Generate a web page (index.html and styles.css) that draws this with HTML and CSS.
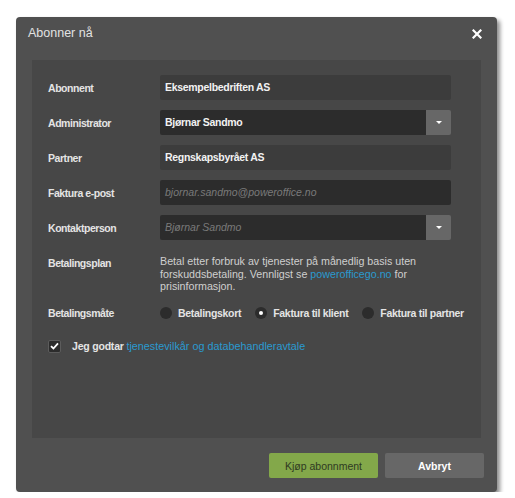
FILE: index.html
```html
<!DOCTYPE html>
<html lang="no">
<head>
    <meta charset="UTF-8">
    <title>Abonner nå</title>
    <link rel="stylesheet" href="styles.css">
</head>
<body>

    <div class="dialog">
        <div class="dialog-header">
            <span class="dialog-title">Abonner nå</span>
            <svg class="close" width="10" height="10" viewBox="0 0 10 10">
                <path d="M1.5 1.5L8.5 8.5M8.5 1.5L1.5 8.5" stroke="#fff" stroke-width="2.2" stroke-linecap="square"/>
            </svg>
        </div>

        <div class="panel">
            <div class="row">
                <div class="label">Abonnent</div>
                <div class="field readonly">Eksempelbedriften AS</div>
            </div>
            <div class="row">
                <div class="label">Administrator</div>
                <div class="select">
                    <div class="field dark">Bjørnar Sandmo</div>
                    <div class="caret"><span></span></div>
                </div>
            </div>
            <div class="row">
                <div class="label">Partner</div>
                <div class="field readonly">Regnskapsbyrået AS</div>
            </div>
            <div class="row">
                <div class="label">Faktura e-post</div>
                <div class="field dark placeholder">bjornar.sandmo@poweroffice.no</div>
            </div>
            <div class="row">
                <div class="label">Kontaktperson</div>
                <div class="select">
                    <div class="field dark placeholder">Bjørnar Sandmo</div>
                    <div class="caret"><span></span></div>
                </div>
            </div>
            <div class="row text-row">
                <div class="label">Betalingsplan</div>
                <p class="plan">Betal etter forbruk av tjenester på månedlig basis uten forskuddsbetaling. Vennligst se <a href="#">powerofficego.no</a> for prisinformasjon.</p>
            </div>
            <div class="row radio-row">
                <div class="label">Betalingsmåte</div>
                <div class="radios">
                    <span class="radio"><i></i>Betalingskort</span>
                    <span class="radio checked"><i></i>Faktura til klient</span>
                    <span class="radio"><i></i>Faktura til partner</span>
                </div>
            </div>
            <div class="terms">
                <span class="checkbox">
                    <svg width="9" height="8" viewBox="0 0 9 8"><path d="M1 4.2L3.4 6.5L8 1.3" fill="none" stroke="#fff" stroke-width="1.8"/></svg>
                </span>
                <span class="terms-text">Jeg godtar <a href="#">tjenestevilkår og databehandleravtale</a></span>
            </div>
        </div>

        <div class="dialog-footer">
            <button class="btn btn-buy">Kjøp abonnment</button>
            <button class="btn btn-cancel">Avbryt</button>
        </div>
    </div>

</body>
</html>
```

FILE: styles.css
```css
body {
    margin: 0;
    padding: 17px 0 0 16px;
    background: #ffffff;
    font-family: "Liberation Sans", Arial, sans-serif;
}
.dialog {
    width: 481px;
    height: 475px;
    background: #505050;
    border-radius: 4px;
    box-shadow: 3px 3px 4px rgba(0, 0, 0, 0.45);
    display: flex;
    flex-direction: column;
}
.dialog-header {
    height: 43px;
    display: flex;
    align-items: center;
    justify-content: space-between;
    padding: 0 15px 0 12px;
}
.dialog-title {
    color: #e2e2e2;
    font-size: 12.5px;
    margin-top: -11px;
}
.close {
    margin-top: -10px;
}
.panel {
    margin: 0 16px;
    height: 378px;
    background: #474747;
    padding: 15px 30px 0 16px;
    box-sizing: border-box;
}
.row {
    display: flex;
    align-items: center;
    margin-bottom: 10px;
}
.label,
.radio,
.terms-text {
    font-size: 10.5px;
    font-weight: bold;
    letter-spacing: -0.45px;
    color: #e4e4e4;
}
.label {
    width: 112px;
    flex-shrink: 0;
}
.field {
    flex: 1;
    height: 25px;
    line-height: 25px;
    padding-left: 5px;
    color: #f2f2f2;
    font-size: 10.5px;
    font-weight: bold;
    letter-spacing: -0.3px;
    border-radius: 2px;
}
.readonly {
    background: #3c3c3c;
}
.dark {
    background: #2c2c2c;
}
.placeholder {
    color: #7a7a7a;
    font-weight: normal;
    font-style: italic;
    letter-spacing: 0;
}
.select {
    flex: 1;
    display: flex;
}
.select .field {
    border-radius: 2px 0 0 2px;
}
.caret {
    width: 25px;
    height: 25px;
    background: #676767;
    border-radius: 0 2px 2px 0;
    display: flex;
    align-items: center;
    justify-content: center;
}
.caret span {
    width: 0;
    height: 0;
    border-left: 3px solid transparent;
    border-right: 3px solid transparent;
    border-top: 3px solid #ffffff;
}
.text-row {
    align-items: flex-start;
    margin-top: 15px;
}
.text-row .label {
    padding-top: 2px;
}
.plan {
    margin: 0;
    color: #cfcfcf;
    font-size: 10.7px;
    line-height: 12.5px;
    width: 275px;
}
a {
    color: #2a9ad0;
    text-decoration: none;
}
.radio-row {
    margin-top: 14px;
}
.radios {
    display: flex;
    gap: 14px;
}
.radio {
    display: flex;
    align-items: center;
    white-space: nowrap;
    letter-spacing: -0.3px;
}
.radio i {
    width: 12px;
    height: 12px;
    border-radius: 50%;
    background: #2c2c2c;
    margin-right: 6px;
    display: flex;
    align-items: center;
    justify-content: center;
}
.radio.checked i::after {
    content: "";
    width: 4px;
    height: 4px;
    border-radius: 50%;
    background: #ffffff;
}
.terms {
    display: flex;
    align-items: center;
    margin-top: 21px;
}
.checkbox {
    width: 11px;
    height: 11px;
    background: #2c2c2c;
    border: 1px solid #5c5c5c;
    border-radius: 2px;
    display: flex;
    align-items: center;
    justify-content: center;
    margin-right: 11px;
}
.terms-text {
    letter-spacing: -0.2px;
}
.terms-text a {
    font-size: 10.8px;
    font-weight: normal;
    letter-spacing: 0;
}
.dialog-footer {
    display: flex;
    justify-content: flex-end;
    gap: 7px;
    padding: 15px 13px 0 0;
}
.btn {
    height: 25px;
    border: none;
    border-radius: 2px;
    font-family: "Liberation Sans", Arial, sans-serif;
    font-size: 10.5px;
}
.btn-buy {
    width: 109px;
    background: #83a84a;
    color: #2f3a22;
}
.btn-cancel {
    width: 99px;
    background: #676767;
    color: #ffffff;
    font-weight: bold;
}
```
